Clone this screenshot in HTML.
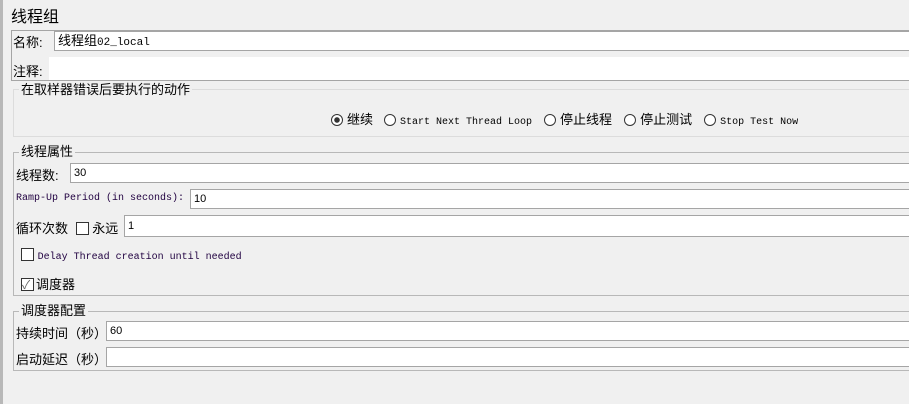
<!DOCTYPE html>
<html><head><meta charset="utf-8"><style>
body{margin:0;width:909px;height:404px;background:#f0f0f0;position:relative;overflow:hidden;font-family:"Liberation Sans","Noto Sans CJK SC",sans-serif;font-size:13px;color:#000}
.a{position:absolute;white-space:nowrap}
.in{position:absolute;background:#fff;border:1px solid #a5a5a5;border-right:none;box-sizing:border-box;height:20px;right:0;font-size:11px;line-height:18px;padding-left:3px}
.grp{position:absolute;left:13px;right:-2px;border:1px solid #b8b8b8;box-sizing:border-box}
.gl{position:absolute;top:-10px;left:5px;background:#f0f0f0;padding:0 2px;font-size:13px;line-height:17px}
.mono{font-family:"Liberation Mono","Noto Sans CJK SC",monospace;font-size:10px}
.rb{display:inline-block;width:12px;height:12px;border:1px solid #333;border-radius:50%;vertical-align:-2px;margin-right:4px;box-sizing:border-box;background:#fff}
.cb{display:inline-block;width:13px;height:13px;border:1px solid #333;vertical-align:-2px;box-sizing:border-box;background:#fff}
</style></head><body>
<div class="a" style="left:0;top:0;width:3px;height:404px;background:#b8b8b8"></div>
<div class="a" style="left:11px;top:3px;font-size:16px">线程组</div>
<div class="a" style="left:11px;top:30px;right:-2px;height:51px;border:1px solid #a5a5a5;box-sizing:border-box"></div>
<div class="a" style="left:13px;top:32px">名称:</div>
<div class="in" style="left:54px;top:31px"><span style="font-size:13px">线程组</span><span class="mono" style="font-size:11px">02_local</span></div>
<div class="a" style="left:13px;top:61px">注释:</div>
<div class="a" style="left:49px;top:57px;right:0;height:23px;background:#fff;border-bottom:1px solid #a5a5a5"></div>

<div class="grp" style="top:89px;height:48px;border-color:#dcdcdc;border-right:none"><div class="gl" style="top:-9px">在取样器错误后要执行的动作</div></div>
<div class="a" style="left:331px;top:109px">
<span class="rb" style="background:radial-gradient(circle,#333 0 2.5px,#fff 3px)"></span>继续<span class="rb" style="margin-left:11px"></span><span class="mono">Start Next Thread Loop</span><span class="rb" style="margin-left:12px"></span>停止线程<span class="rb" style="margin-left:12px"></span>停止测试<span class="rb" style="margin-left:12px"></span><span class="mono">Stop Test Now</span>
</div>

<div class="grp" style="top:152px;height:144px"><div class="gl">线程属性</div></div>
<div class="a" style="left:16px;top:165px">线程数:</div>
<div class="in" style="left:70px;top:163px">30</div>
<div class="a mono" style="left:16px;top:193px;color:#200040">Ramp-Up Period (in seconds):</div>
<div class="in" style="left:190px;top:189px">10</div>
<div class="a" style="left:16px;top:218px">循环次数 <span class="cb" style="margin-left:4px"></span> 永远</div>
<div class="in" style="left:124px;top:215px;height:22px;line-height:20px">1</div>
<div class="a" style="left:21px;top:247px"><span class="cb"></span> <span class="mono" style="color:#200040">Delay Thread creation until needed</span></div>
<div class="a" style="left:21px;top:274px"><span class="cb" style="position:relative;margin-right:2px"><span style="position:absolute;left:0;top:-3px;font-size:12px;color:#666">✓</span></span>调度器</div>

<div class="grp" style="top:311px;height:60px"><div class="gl">调度器配置</div></div>
<div class="a" style="left:16px;top:323px">持续时间（秒）</div>
<div class="in" style="left:106px;top:321px">60</div>
<div class="a" style="left:16px;top:349px">启动延迟（秒）</div>
<div class="in" style="left:106px;top:347px"></div>
</body></html>
